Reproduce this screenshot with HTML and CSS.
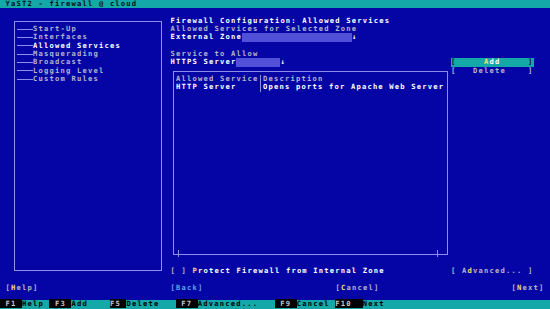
FILE: index.html
```html
<!DOCTYPE html>
<html lang="en">
<head>
    <meta charset="UTF-8">
    <title>YaST2 - firewall @ cloud</title>
    <link rel="stylesheet" href="styles.css">
</head>
<body>
    <!-- text console: 100 columns x 37 rows -->
    <div class="screen">
        <div class="title-bar"> YaST2 - firewall @ cloud</div>

        <!-- Left navigation tree -->
        <div class="tree-box"></div>
        <ul class="tree">
            <li>Start-Up</li>
            <li>Interfaces</li>
            <li class="current">Allowed Services</li>
            <li>Masquerading</li>
            <li>Broadcast</li>
            <li>Logging Level</li>
            <li>Custom Rules</li>
        </ul>

        <!-- Right dialog -->
        <div class="heading">Firewall Configuration: Allowed Services</div>
        <div class="zone-label">Allowed Services for Selected Zone</div>
        <div class="zone combo"><span class="value">External Zone</span><span class="field zone-field"></span><span class="arrow">↓</span></div>

        <div class="service-label">Service to Allow</div>
        <div class="service combo"><span class="value">HTTPS Server</span><span class="field service-field"></span><span class="arrow">↓</span></div>

        <div class="btn btn-add focused"><span class="br">[</span>     <span class="hk">A</span>dd     <span class="br">]</span></div>
        <div class="btn btn-delete">[   Delete    ]</div>

        <div class="table-box">
            <div class="trow thead">
                <div class="col1">Allowed Service</div>
                <div class="col2">Description</div>
            </div>
            <div class="trow tdata">
                <div class="col1">HTTP Server</div>
                <div class="col2">Opens ports for Apache Web Server</div>
            </div>
        </div>
        <div class="tick tick-left"></div>
        <div class="tick tick-right"></div>

        <div class="protect">[ ] <span class="strong"><span class="hk">P</span>rotect Firewall from Internal Zone</span></div>
        <div class="btn btn-adv">[ A<span class="hk">d</span>vanced... ]</div>

        <div class="btn btn-help">[<span class="hk">H</span>elp]</div>
        <div class="btn btn-back">[Back]</div>
        <div class="btn btn-cancel">[<span class="hk">C</span>ancel]</div>
        <div class="btn btn-next">[<span class="hk">N</span>ext]</div>

        <!-- Function key bar -->
        <div class="fkeys"><span class="key"> F1 </span>Help <span class="key"> F3 </span>Add    <span class="key">F5 </span>Delete   <span class="key"> F7 </span>Advanced...   <span class="key"> F9 </span>Cancel <span class="key">F10  </span>Next</div>
    </div>
</body>
</html>
```

FILE: styles.css
```css
/* Reset */
* {
    margin: 0;
    padding: 0;
    box-sizing: border-box;
}

body {
    width: 550px;
    height: 309px;
    overflow: hidden;
    background-color: #0505a5;
}

/* Console grid: every cell is 5.5 x 8.35 px */
.screen {
    display: grid;
    grid-template-columns: repeat(100, 5.5px);
    grid-template-rows: repeat(37, 8.35px);
    width: 550px;
    height: 309px;
    font-family: "DejaVu Sans Mono", monospace;
    font-size: 7.15px;
    font-weight: bold;
    letter-spacing: 1.195px;
    line-height: 8.35px;
    color: #b4b4cc;
}

/* Cell text keeps its spaces */
.title-bar,
.heading,
.zone-label,
.service-label,
.combo span,
.btn,
.protect,
.fkeys,
.tree li,
.trow > div {
    white-space: pre;
}

/* Title bar */
.title-bar {
    grid-row: 1;
    grid-column: 1 / -1;
    background-color: #14a8a8;
    color: #06101a;
}

/* Frames are drawn through the middle of the cells */
.tree-box,
.table-box {
    margin: 4.17px 2.75px;
    border: 1px solid #8f8fea;
}

.tree-box {
    grid-column: 3 / 31;
    grid-row: 3 / 34;
}

.tree {
    grid-column: 4 / 30;
    grid-row: 4 / 11;
    list-style: none;
    display: flex;
    flex-direction: column;
}

.tree li {
    display: flex;
    align-items: center;
    height: 8.35px;
}

.tree li::before {
    content: "";
    width: 16.5px;
    height: 1px;
    background-color: #8f8fea;
}

/* Bright text */
.tree .current,
.heading,
.value,
.tdata,
.strong,
.arrow {
    color: #fff;
}

.heading {
    grid-column: 32 / 101;
    grid-row: 3;
}

.zone-label {
    grid-column: 32 / 101;
    grid-row: 4;
}

.combo {
    display: flex;
}

.zone {
    grid-column: 32 / 80;
    grid-row: 5;
}

.service-label {
    grid-column: 32 / 80;
    grid-row: 7;
}

.service {
    grid-column: 32 / 80;
    grid-row: 8;
}

.field {
    background-color: #5050d8;
}

.zone-field {
    width: 110px;
}

.service-field {
    width: 44px;
}

/* Buttons */
.btn-add {
    grid-column: 83 / 98;
    grid-row: 8;
}

.btn-delete {
    grid-column: 83 / 98;
    grid-row: 9;
}

.focused {
    background-color: #14a8a8;
    color: #fff;
}

.focused .br {
    color: #0a1a3a;
}

.hk {
    color: #f2e070;
}

.btn-adv {
    grid-column: 83 / 98;
    grid-row: 33;
}

.btn-help {
    grid-column: 2 / 8;
    grid-row: 35;
}

.btn-back {
    grid-column: 32 / 38;
    grid-row: 35;
    color: #5aa4e6;
}

.btn-cancel {
    grid-column: 62 / 70;
    grid-row: 35;
}

.btn-next {
    grid-column: 94 / 100;
    grid-row: 35;
}

/* Services table */
.table-box {
    grid-column: 32 / 83;
    grid-row: 9 / 32;
    padding: 3.18px 0 0 1.75px;
    display: flex;
    flex-direction: column;
}

.trow {
    display: flex;
    height: 8.35px;
}

.col1 {
    width: 84.75px;
    border-right: 1px solid #8f8fea;
}

.col2 {
    padding-left: 2.25px;
}

.tick {
    grid-row: 31;
    justify-self: center;
    align-self: center;
    width: 1px;
    height: 7px;
    margin-top: -2px;
    background-color: #8f8fea;
}

.tick-left {
    grid-column: 33;
}

.tick-right {
    grid-column: 80;
}

.protect {
    grid-column: 32 / 80;
    grid-row: 33;
}

/* Function key bar */
.fkeys {
    grid-row: 37;
    grid-column: 1 / -1;
    background-color: #14a8a8;
    color: #000;
}

.fkeys .key {
    background-color: #000;
    color: #c8c8c8;
}
```
